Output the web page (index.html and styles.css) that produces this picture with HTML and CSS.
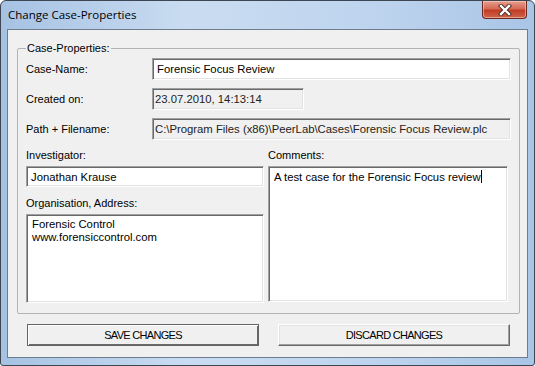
FILE: index.html
```
<!DOCTYPE html>
<html lang="en">
<head>
    <meta charset="UTF-8">
    <title>Change Case-Properties</title>
    <link rel="stylesheet" href="styles.css">
</head>
<body>

    <div class="window">
        <!-- Title bar -->
        <div class="titlebar">
            <span class="title">Change Case-Properties</span>
            <div class="close-btn">
                <svg width="18" height="12" viewBox="0 0 18 12">
                    <path d="M5 2 L13 10 M13 2 L5 10" stroke="#4a2a26" stroke-width="4.2" stroke-linecap="square"/>
                    <path d="M5 2 L13 10 M13 2 L5 10" stroke="#ffffff" stroke-width="2.4" stroke-linecap="square"/>
                </svg>
            </div>
        </div>

        <div class="client">
            <fieldset class="group">
                <legend>Case-Properties:</legend>

                <div class="props">
                    <label>Case-Name:</label>
                    <div class="textbox">Forensic Focus Review</div>

                    <label>Created on:</label>
                    <div class="textbox readonly short">23.07.2010, 14:13:14</div>

                    <label>Path + Filename:</label>
                    <div class="textbox readonly">C:\Program Files (x86)\PeerLab\Cases\Forensic Focus Review.plc</div>
                </div>

                <div class="columns">
                    <div class="col">
                        <label>Investigator:</label>
                        <div class="textbox single">Jonathan Krause</div>
                        <label class="spaced">Organisation, Address:</label>
                        <div class="textbox area org">Forensic Control<br>www.forensiccontrol.com</div>
                    </div>
                    <div class="col">
                        <label>Comments:</label>
                        <div class="textbox area comments">A test case for the Forensic Focus review<span class="caret"></span></div>
                    </div>
                </div>
            </fieldset>

            <div class="buttons">
                <button class="btn default">SAVE CHANGES</button>
                <button class="btn">DISCARD CHANGES</button>
            </div>
        </div>
    </div>

</body>
</html>
```

FILE: styles.css
```
body { margin: 0; font-family: "Liberation Sans", Arial, sans-serif; font-size: 11px; color: #000; background: #fff; }

/* Window frame */
.window {
    width: 535px; height: 366px; box-sizing: border-box; display: flex; flex-direction: column;
    border: 1px solid #3d4652; border-radius: 6px 6px 3px 3px;
    background: linear-gradient(to right, #a6c2e3 0%, #c9dcf1 35%, #bed4ee 70%, #a9c5e6 100%);
}
.titlebar { height: 28px; display: flex; align-items: flex-start; justify-content: space-between; }
.title { font-family: "Open Sans", "Liberation Sans", sans-serif; font-size: 11.5px; color: #000; margin: 6px 0 0 7px; }
.close-btn {
    width: 45px; height: 18px; margin-right: 7px; box-sizing: border-box;
    display: flex; align-items: center; justify-content: center;
    border: 1px solid #6a2a22; border-top: none; border-radius: 0 0 4px 4px;
    background: linear-gradient(#e6a08f 0%, #d56a55 45%, #c13d25 55%, #d0664c 100%);
    box-shadow: inset 0 0 0 1px rgba(255, 220, 210, 0.5);
}

/* Client area */
.client {
    flex: 1; margin: 0 6px 7px 6px; display: flex; flex-direction: column;
    border: 1px solid #6d7d8e; background: #f0f0f0; padding: 0 7px 0 9px;
}

.group { margin: 12px 0 0 0; padding: 0 8px 10px 8px; border: 1px solid #b4b4b4; border-radius: 2px; }
.group legend { padding: 0 1px; font-size: 11px; line-height: 13px; }

label { display: block; line-height: 14px; }

.props { display: grid; grid-template-columns: 126px 1fr; row-gap: 8px; align-items: center; margin-top: 3px; }

/* Sunken text boxes */
.textbox {
    box-sizing: border-box; height: 22px; padding: 3px 4px; line-height: 14px; white-space: nowrap; overflow: hidden;
    font-size: 11.3px;
    background: #fff; border: 1px solid; border-color: #a0a0a0 #fff #fff #a0a0a0;
    box-shadow: inset 1px 1px 0 #696969, inset -1px -1px 0 #e3e3e3;
}
.textbox.readonly { background: #f0f0f0; color: #222; padding-left: 2px; }
.textbox.short { width: 152px; }
.textbox.single { height: 21px; margin-top: 4px; }
.textbox.area { white-space: normal; margin-top: 4px; padding: 3px 5px; line-height: 13px; }
.textbox.org { height: 89px; }
.textbox.comments { height: 136px; }
.caret { display: inline-block; width: 1px; height: 13px; background: #000; vertical-align: -2px; }

.columns { display: grid; grid-template-columns: 238px 1fr; column-gap: 4px; margin-top: 8px; margin-right: 3px; }
.col label.spaced { margin-top: 9px; }

/* Buttons */
.buttons { display: flex; gap: 19px; margin: 10px 0 0 10px; padding-right: 8px; }
.btn {
    width: 232px; height: 22px; padding: 0; font-family: inherit; font-size: 11px; letter-spacing: -0.7px; color: #000;
    background: #f0f0f0; border: 1px solid; border-color: #fff #696969 #696969 #fff;
    box-shadow: inset -1px -1px 0 #a0a0a0, inset 1px 1px 0 #e3e3e3;
}
.btn.default { border-color: #646464; box-shadow: inset 1px 1px 0 #fff, inset -1px -1px 0 #696969; }
```
